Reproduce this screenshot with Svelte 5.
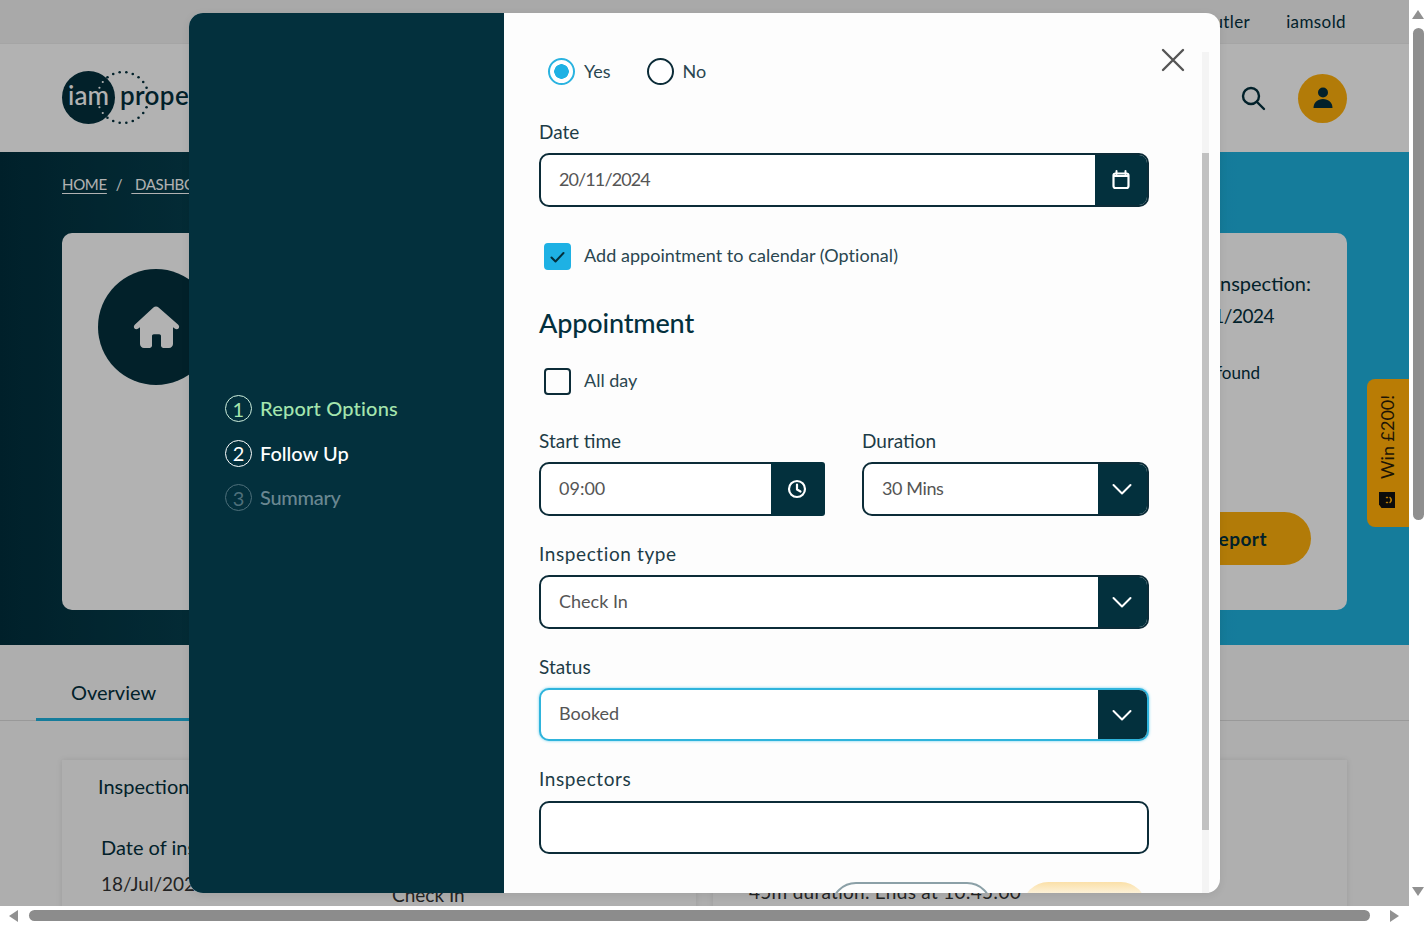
<script>
  const steps = [
    { n: 1, label: 'Report Options', cls: 'done' },
    { n: 2, label: 'Follow Up', cls: 'active' },
    { n: 3, label: 'Summary', cls: 'todo' }
  ];
  // Logo ring: 24 dots round the disc's neighbour, with gaps where the wordmark and "iam" sit.
  const ringDots = Array.from({ length: 24 }, (_, i) => {
    const a = (i * 15 + 7.5) * Math.PI / 180;
    const x = 61 + 25.5 * Math.cos(a);
    const y = 29.5 + 25.5 * Math.sin(a);
    return { x, y, skip: Math.abs(y - 29.5) < 9, inDisc: Math.hypot(x - 26.5, y - 29.5) < 25.5 };
  }).filter((d) => !d.skip);
</script>

{#snippet chevron()}
  <span class="append wide">
    <svg width="22" height="22" viewBox="0 0 22 22" fill="none" stroke="#fff" stroke-width="2" stroke-linecap="round" stroke-linejoin="round"><path d="M2.500 7 11 15.500 19.500 7"/></svg>
  </span>
{/snippet}

<div class="root">
  <div class="viewport">
    <div class="page">
      <div class="topbar"><span>Butler</span><span>iamsold</span></div>
      <header class="header">
        <div class="logo">
          <span class="logo-disc"><span>iam</span></span>
          <svg class="logo-dots" width="110" height="60" viewBox="0 0 110 60">
            {#each ringDots as d}
              <circle cx={d.x} cy={d.y} r={d.inDisc ? 1.1 : 1.3} fill={d.inDisc ? '#fff' : '#03303d'}/>
            {/each}
          </svg>
          <span class="logo-word">proper</span>
        </div>
        <div class="header-actions">
          <svg width="26" height="26" viewBox="0 0 26 26" fill="none" stroke="#03303d" stroke-width="2.400" stroke-linecap="round"><circle cx="11" cy="11" r="8"/><path d="m17 17 7 7"/></svg>
          <span class="avatar">
            <svg width="22" height="24" viewBox="0 0 22 24" fill="#03303d"><circle cx="11" cy="6.500" r="5"/><path d="M1.500 22c0-5.500 4-9 9.500-9s9.500 3.500 9.500 9z"/></svg>
          </span>
        </div>
      </header>
      <section class="hero">
        <nav class="crumbs"><u>HOME</u><span>/</span><u>&nbsp;DASHBOARD</u></nav>
        <div class="hero-card">
          <div class="disc">
            <svg width="48" height="44" viewBox="0 0 48 44" fill="#fff"><path d="M24 1.500c1 0 1.900.4 2.600 1L46 19.500c1.300 1.200 1.500 3 .5 4-1 1.100-2.600 1-3.800.1L41 22.300V39c0 2.200-1.800 4-4 4h-5.500c-1.300 0-2.500-1.100-2.500-2.500V31c0-1-.8-1.800-1.800-1.800h-5.400c-1 0-1.800.8-1.800 1.800v9.500c0 1.400-1.200 2.500-2.500 2.500H12c-2.200 0-4-1.800-4-4V22.300l-1.700 1.300c-1.200.9-2.800 1-3.800-.1-1-1-.8-2.800.5-4L21.400 2.500c.7-.6 1.600-1 2.600-1z"/></svg>
          </div>
          <div class="hero-info">
            <div class="hero-title">Next inspection:</div>
            <div class="hero-date">20/11/2024</div>
            <div class="hero-note">No issues found</div>
            <div class="hero-btn">Start Report</div>
          </div>
        </div>
      </section>
      <div class="tabs"><span class="tab">Overview</span></div>
      <section class="cards">
        <div class="card">
          <div class="card-title">Inspection details</div>
          <div class="card-grid">
            <div><div class="term">Date of inspection</div><div class="val">18/Jul/2024</div></div>
            <div class="val type">Check In</div>
          </div>
        </div>
        <div class="card">
          <div class="val dur">45m duration. Ends at 10:45:00</div>
        </div>
      </section>
      <div class="overlay"></div>
      <div class="win">
        <span class="win-text">Win £200!</span>
        <svg width="18" height="18" viewBox="0 0 18 18"><path d="M1 3.500 4.500 1H17v16H1z" fill="#0b0b0b"/><path d="M6.500 8.500v1M11.500 8.500v1M6.500 12c1.500 1.500 3.500 1.500 5 0" stroke="#b97c05" stroke-width="1.500" fill="none" stroke-linecap="round"/></svg>
      </div>

      <div class="modal">
        <aside class="side">
          {#each steps as s}
            <div class="step {s.cls}"><span class="num">{s.n}</span><span class="step-text">{s.label}</span></div>
          {/each}
        </aside>
        <div class="main">
          <button class="close" aria-label="Close">
            <svg width="24" height="24" viewBox="0 0 24 24" stroke="#555" stroke-width="2.400" stroke-linecap="round"><path d="M2 2l20 20M22 2 2 22"/></svg>
          </button>
          <div class="form">
            <div class="radios">
              <label class="opt"><span class="radio on"></span><span class="txt">Yes</span></label>
              <label class="opt"><span class="radio"></span><span class="txt">No</span></label>
            </div>

            <div class="label first">Date</div>
            <div class="field"><span class="value date">20/11/2024</span>
              <span class="append icon">
                <svg width="20" height="20" viewBox="0 0 20 20" fill="none"><path d="M5.500 1v3M14.500 1v3" stroke="#fff" stroke-width="2" stroke-linecap="round"/><rect x="2.500" y="3.500" width="15" height="14.500" rx="2" stroke="#fff" stroke-width="2.200"/><path d="M2.500 5h15v2h-15z" fill="#fff"/></svg>
              </span>
            </div>

            <label class="opt check-row"><span class="box on">
              <svg width="17" height="14" viewBox="0 0 17 14" fill="none" stroke="#03303d" stroke-width="2" stroke-linecap="round" stroke-linejoin="round"><path d="M2.500 7.500 6.500 11.500 14.500 3"/></svg>
            </span><span class="txt">Add appointment to calendar (Optional)</span></label>

            <h2>Appointment</h2>

            <label class="opt allday"><span class="box"></span><span class="txt">All day</span></label>

            <div class="two">
              <div class="col-a">
                <div class="label">Start time</div>
                <div class="field timef"><span class="value">09:00</span>
                  <span class="append icon time">
                    <svg width="20" height="20" viewBox="0 0 20 20" fill="none" stroke="#fff" stroke-width="2.200" stroke-linecap="round" stroke-linejoin="round"><circle cx="10" cy="10" r="8"/><path d="M10 5.500V10.500l3.500 2"/></svg>
                  </span>
                </div>
              </div>
              <div class="col-b">
                <div class="label">Duration</div>
                <div class="field"><span class="value mins">30 Mins</span>{@render chevron()}</div>
              </div>
            </div>

            <div class="label spaced">Inspection type</div>
            <div class="field"><span class="value">Check In</span>{@render chevron()}</div>

            <div class="label">Status</div>
            <div class="field focus"><span class="value">Booked</span>{@render chevron()}</div>

            <div class="label last spaced">Inspectors</div>
            <div class="field slim"></div>

            <div class="footer">
              <span class="btn ghost"></span>
              <span class="btn solid"></span>
            </div>
          </div>
          <div class="modal-track"><div class="modal-thumb"></div></div>
        </div>
      </div>
    </div>
  </div>

  <div class="vbar">
    <svg width="12" height="10" viewBox="0 0 12 10" fill="#919191"><path d="M6 0 12 9H0z"/></svg>
    <div class="vthumb"></div>
    <svg class="down" width="12" height="10" viewBox="0 0 12 10" fill="#919191"><path d="M6 9 12 0H0z"/></svg>
  </div>
  <div class="hbar">
    <svg width="10" height="12" viewBox="0 0 10 12" fill="#919191"><path d="M0 6 9 0V12z"/></svg>
    <div class="hthumb"></div>
    <svg width="10" height="12" viewBox="0 0 10 12" fill="#919191"><path d="M9 6 0 0V12z"/></svg>
  </div>
</div>

<style>
  :global(body) { margin: 0; background: #fff; }
  * { box-sizing: border-box; }
  .root {
    width: 1428px; height: 925px; overflow: hidden;
    display: grid; grid-template-columns: 1409px 19px; grid-template-rows: 906px 19px;
    font-family: Lato, "Noto Sans", sans-serif; color: #03303d;
  }
  .viewport { overflow: hidden; position: relative; }
  .page { width: 1409px; height: 906px; position: relative; background: #f9f9f9; }

  .topbar { height: 44px; background: #f2f2f2; border-bottom: 1px solid #ececec; display: flex; justify-content: flex-end; align-items: center; gap: 36px; padding: 0 63px 0 0; font-size: 17px; letter-spacing: .4px; }
  .header { height: 108px; background: #fff; display: flex; align-items: center; justify-content: space-between; padding: 0 62px; }
  .logo { position: relative; width: 200px; height: 60px; }
  .logo-dots { position: absolute; left: 0; top: 0; }
  .logo-disc { position: absolute; left: 0; top: 3px; width: 53px; height: 53px; border-radius: 50%; background: #03303d; color: #fff; display: flex; align-items: center; justify-content: center; font-size: 26px; font-weight: 500; }
  .logo-disc span { padding-bottom: 5px; }
  .logo-word { position: absolute; left: 58px; top: 11px; font-size: 26px; font-weight: 600; line-height: 32px; letter-spacing: .4px; }
  .header-actions { display: flex; align-items: center; gap: 32px; }
  .avatar { width: 49px; height: 49px; border-radius: 50%; background: #ffb10c; display: flex; align-items: center; justify-content: center; }

  .hero { height: 493px; background: linear-gradient(90deg, #012f3d 0%, #06404f 15%, #1fb2df 88%); padding: 20px 62px 35px; display: flex; flex-direction: column; }
  .crumbs { color: #fff; font-size: 15px; letter-spacing: -.3px; line-height: 24px; display: flex; gap: 9px; height: 61px; }
  .crumbs u { text-underline-offset: 3px; }
  .hero-card { flex: 1; background: #fff; border-radius: 10px; display: flex; justify-content: space-between; padding: 35px 36px 45px; }
  .disc { width: 116px; height: 116px; border-radius: 50%; background: #03303d; display: flex; align-items: center; justify-content: center; margin-top: 1px; }
  .hero-info { display: flex; flex-direction: column; align-items: flex-end; }
  .hero-title { font-size: 20px; line-height: 30px; }
  .hero-date { font-size: 19px; line-height: 28px; margin-top: 4px; margin-right: 37px; letter-spacing: -.5px; }
  .hero-note { font-size: 17px; line-height: 26px; margin-top: 30px; margin-right: 51px; }
  .hero-btn { margin-top: auto; height: 53px; width: 200px; border-radius: 27px; background: #ffb10c; font-weight: 700; font-size: 19px; letter-spacing: .5px; display: flex; align-items: center; justify-content: flex-end; padding-right: 44px; }

  .tabs { height: 76px; border-bottom: 1px solid #dcdcdc; padding-left: 36px; display: flex; }
  .tab { width: 154px; border-bottom: 3px solid #1fb2df; margin-bottom: -1px; font-size: 20px; padding: 35px 0 0 35px; line-height: 24px; }

  .cards { display: grid; grid-template-columns: 634px 634px; gap: 17px; padding: 39px 62px 0; }
  .card { height: 300px; background: #fbfbfb; box-shadow: 0 0 6px rgba(0, 0, 0, .1); padding: 14px 36px; }
  .card-title { font-size: 20px; line-height: 24px; }
  .card-grid { display: grid; grid-template-columns: 294px 1fr; }
  .term { font-size: 20px; line-height: 24px; margin: 37px 0 0 3px; }
  .val { font-size: 19px; line-height: 24px; margin: 13px 0 0 3px; color: #333; }
  .type { margin: 85px 0 0; }
  .dur { margin: 106px 0 0; letter-spacing: .28px; }

  .overlay { position: absolute; inset: 0; background: rgba(0, 0, 0, .3); }
  .win { position: absolute; left: 1367px; top: 379px; width: 42px; height: 148px; background: #b97c05; border-radius: 8px 0 0 8px; display: flex; flex-direction: column; align-items: center; color: #1c1405; padding: 19px 3px 0 0; }
  .win-text { writing-mode: vertical-rl; transform: rotate(180deg); font-size: 18px; line-height: 20px; height: 81px; white-space: nowrap; text-align: left; }
  .win svg { transform: rotate(-90deg); margin-top: 12px; }

  .modal { position: absolute; left: 189px; top: 13px; width: 1031px; height: 880px; border-radius: 14px; overflow: hidden; display: flex; background: #fdfdfd; box-shadow: 0 2px 8px rgba(0, 0, 0, .08); }
  .side { width: 315px; background: #03303d; display: flex; flex-direction: column; justify-content: center; padding-left: 36px; gap: 17.500px; }
  .step { display: flex; align-items: center; gap: 8px; height: 27px; font-size: 20px; font-weight: 500; }
  .step-text { padding-bottom: 1px; }
  .num { width: 27px; height: 27px; border-radius: 50%; border: 1.500px solid currentColor; display: flex; align-items: center; justify-content: center; font-size: 20px; font-weight: 400; }
  .done { color: #a5e5ae; letter-spacing: .2px; }
  .done .num { border-color: #cdeedc; }
  .active { color: #fff; }
  .todo { color: #6a8791; letter-spacing: -.3px; }
  .todo .num { color: #4e6f7a; }

  .main { flex: 1; position: relative; padding: 45px 0 0 35px; }
  .close { position: absolute; left: 657px; top: 35px; width: 24px; height: 24px; padding: 0; border: 0; background: none; display: block; }
  .form { width: 610px; }
  .radios { display: flex; gap: 36px; height: 27px; padding-left: 9px; }
  .radios .txt { padding-bottom: 2px; }
  .opt { display: flex; align-items: center; gap: 9px; font-size: 18px; color: #2a4650; }
  .radio { width: 27px; height: 27px; border-radius: 50%; border: 2px solid #0c2c38; background: #fff; }
  .radio.on { border-color: #2ab3e0; background: radial-gradient(circle, #1eb1e4 0 7px, #fff 7.500px); }
  .check-row { margin-top: 36px; padding-left: 5px; height: 27px; gap: 13px; letter-spacing: .05px; }
  .allday { margin-top: 27px; padding-left: 5px; height: 27px; gap: 13px; }
  .check-row .txt, .allday .txt { padding-bottom: 4px; }
  .box { width: 27px; height: 27px; border-radius: 4px; border: 2px solid #0c2c38; display: flex; align-items: center; justify-content: center; }
  .box.on { background: #1eb1e4; border-color: #1eb1e4; }
  h2 { margin: 35px 0 0; font-size: 27px; line-height: 36px; font-weight: 500; color: #03303d; letter-spacing: -.15px; }

  .label { margin-top: 26px; margin-bottom: 9px; font-size: 19px; line-height: 24px; color: #1d3c47; }
  .label.first { margin-top: 35px; }
  .label.last { margin-bottom: 10px; }
  .label.spaced { letter-spacing: .6px; }
  .field { height: 54px; border: 2px solid #0c2c38; border-radius: 10px; display: flex; align-items: center; justify-content: space-between; background: #fff; overflow: hidden; padding-left: 18px; }
  .field.focus { height: 53px; border-color: #2fb4dc; box-shadow: 0 0 3px #6fd0ee; }
  .field.focus .value { padding-bottom: 3px; }
  .field.slim { height: 53px; }
  .field.timef { overflow: visible; }
  .value { font-size: 18px; color: #555; padding-bottom: 2px; }
  .value.date { letter-spacing: -.9px; }
  .value.mins { letter-spacing: -.4px; }
  .append { width: 54px; align-self: stretch; margin: -2px; background: #03303d; display: flex; align-items: center; justify-content: center; }
  .append.wide { width: 51px; padding-right: 3px; }
  .append.icon { padding-right: 2px; }
  .append.time { border-radius: 0 3px 3px 0; }
  .two { display: flex; justify-content: space-between; margin-top: 34px; }
  .two .label { margin-top: 0; }
  .col-a { width: 286px; }
  .col-b { width: 287px; }
  .footer { margin-top: 28px; padding-left: 292px; display: flex; gap: 31px; }
  .btn { height: 50px; border-radius: 25px; display: block; }
  .ghost { width: 161px; border: 2px solid #8ba0a7; }
  .solid { width: 123px; background: linear-gradient(#fbe0a8, #fdf3dc 12px); }

  .modal-track { position: absolute; left: 698px; top: 39px; bottom: 0; width: 7px; background: #f4f4f4; }
  .modal-thumb { margin-top: 101px; height: 677px; background: #c1c1c1; }

  .vbar { grid-column: 2; grid-row: 1; position: relative; background: #fff; }
  .vbar svg { position: absolute; left: 3px; top: 10px; }
  .vbar .down { top: 887px; }
  .vthumb { position: absolute; left: 4px; top: 28px; width: 11px; height: 492px; border-radius: 6px; background: #8f8f8f; }
  .hbar { grid-column: 1 / 3; grid-row: 2; background: #fff; display: flex; align-items: center; padding: 0 28px 0 9px; gap: 10px; justify-content: space-between; }
  .hthumb { flex: 1; height: 11px; border-radius: 6px; background: #8c8c8c; margin-right: 10px; }
</style>
